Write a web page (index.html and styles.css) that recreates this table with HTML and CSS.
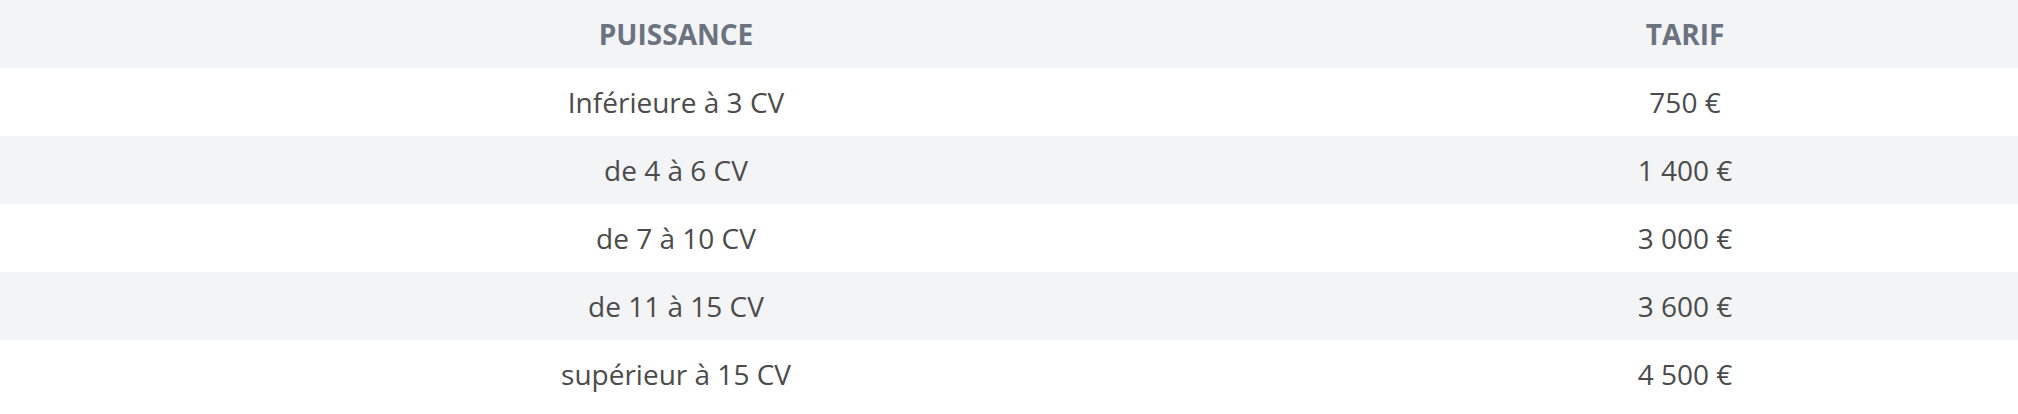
FILE: index.html
```html
<!DOCTYPE html>
<html lang="fr">
    <head>
        <meta charset="UTF-8" />
        <meta name="viewport" content="width=device-width, initial-scale=1" />
        <title>Tarifs</title>
        <link rel="stylesheet" href="styles.css">
    </head>
    <body>
        <table class="tarifs">
            <thead>
                <tr>
                    <th class="col-puissance">Puissance</th>
                    <th class="col-tarif">Tarif</th>
                </tr>
            </thead>
            <tbody>
                <tr>
                    <td>Inférieure à 3 CV</td>
                    <td>750 €</td>
                </tr>
                <tr>
                    <td>de 4 à 6 CV</td>
                    <td>1 400 €</td>
                </tr>
                <tr>
                    <td>de 7 à 10 CV</td>
                    <td>3 000 €</td>
                </tr>
                <tr>
                    <td>de 11 à 15 CV</td>
                    <td>3 600 €</td>
                </tr>
                <tr>
                    <td>supérieur à 15 CV</td>
                    <td>4 500 €</td>
                </tr>
            </tbody>
        </table>
    </body>
</html>
```

FILE: styles.css
```css
/* Reset */
* {
    box-sizing: border-box;
    margin: 0;
    padding: 0;
}
body {
    font-family: "Open Sans", "Liberation Sans", sans-serif;
    background: #fff;
    color: #4b4b4b;
}
.tarifs {
    width: 100%;
    border-collapse: collapse;
    table-layout: fixed;
}
.col-puissance {
    width: 67%;
}
.col-tarif {
    width: 33%;
}
th,
td {
    height: 68px;
    text-align: center;
    vertical-align: middle;
}
th {
    background: #f3f4f6;
    color: #6b7280;
    font-size: 28px;
    font-weight: 700;
    text-transform: uppercase;
}
td {
    font-size: 28px;
}
tbody tr:nth-child(even) {
    background: #f3f4f6;
}
```
